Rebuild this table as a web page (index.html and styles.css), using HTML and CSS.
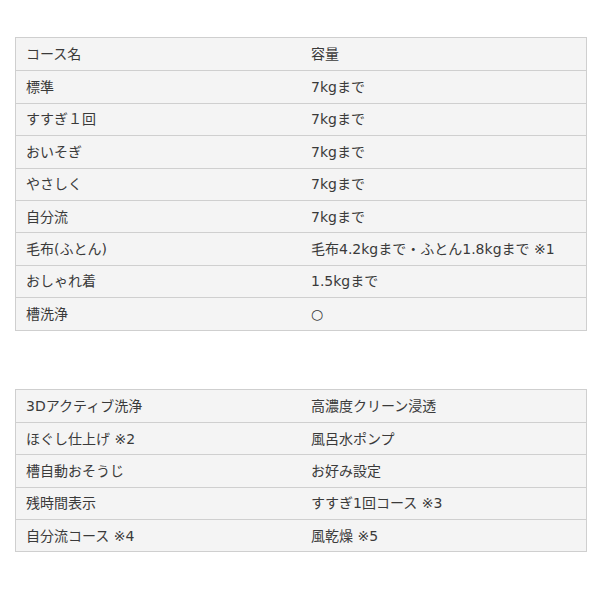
FILE: index.html
```html
<!DOCTYPE html>
<html lang="ja">
<head>
<meta charset="utf-8">
<link rel="stylesheet" href="styles.css">
</head>
<body>
<div class="page">
  <div class="spec">
    <div class="row"><div class="cell">コース名</div><div class="cell">容量</div></div>
    <div class="row"><div class="cell">標準</div><div class="cell">7kgまで</div></div>
    <div class="row"><div class="cell">すすぎ１回</div><div class="cell">7kgまで</div></div>
    <div class="row"><div class="cell">おいそぎ</div><div class="cell">7kgまで</div></div>
    <div class="row"><div class="cell">やさしく</div><div class="cell">7kgまで</div></div>
    <div class="row"><div class="cell">自分流</div><div class="cell">7kgまで</div></div>
    <div class="row"><div class="cell">毛布(ふとん)</div><div class="cell">毛布4.2kgまで・ふとん1.8kgまで ※1</div></div>
    <div class="row"><div class="cell">おしゃれ着</div><div class="cell">1.5kgまで</div></div>
    <div class="row"><div class="cell">槽洗浄</div><div class="cell">○</div></div>
  </div>
  <div class="spec">
    <div class="row"><div class="cell">3Dアクティブ洗浄</div><div class="cell">高濃度クリーン浸透</div></div>
    <div class="row"><div class="cell">ほぐし仕上げ ※2</div><div class="cell">風呂水ポンプ</div></div>
    <div class="row"><div class="cell">槽自動おそうじ</div><div class="cell">お好み設定</div></div>
    <div class="row"><div class="cell">残時間表示</div><div class="cell">すすぎ1回コース ※3</div></div>
    <div class="row"><div class="cell">自分流コース ※4</div><div class="cell">風乾燥 ※5</div></div>
  </div>
</div>
</body>
</html>
```
FILE: styles.css
```css
html, body {
  margin: 0;
  padding: 0;
  background: #fff;
}
.page {
  padding: 37px 14px 0 15px;
  display: flex;
  flex-direction: column;
  gap: 58px;
}
.spec {
  width: 572px;
  box-sizing: border-box;
  background: #f4f4f4;
  border: 1px solid #cfcfcf;
  font-family: "DejaVu Sans", "Noto Sans CJK JP", sans-serif;
  font-size: 14px;
  color: #3a3a3a;
}
.row {
  display: grid;
  grid-template-columns: 1fr 1fr;
  height: 32.4px;
  box-sizing: border-box;
  align-items: center;
  line-height: 1;
}
.row + .row {
  border-top: 1px solid #cfcfcf;
}
.cell {
  padding: 0 10px;
  white-space: nowrap;
}
```
